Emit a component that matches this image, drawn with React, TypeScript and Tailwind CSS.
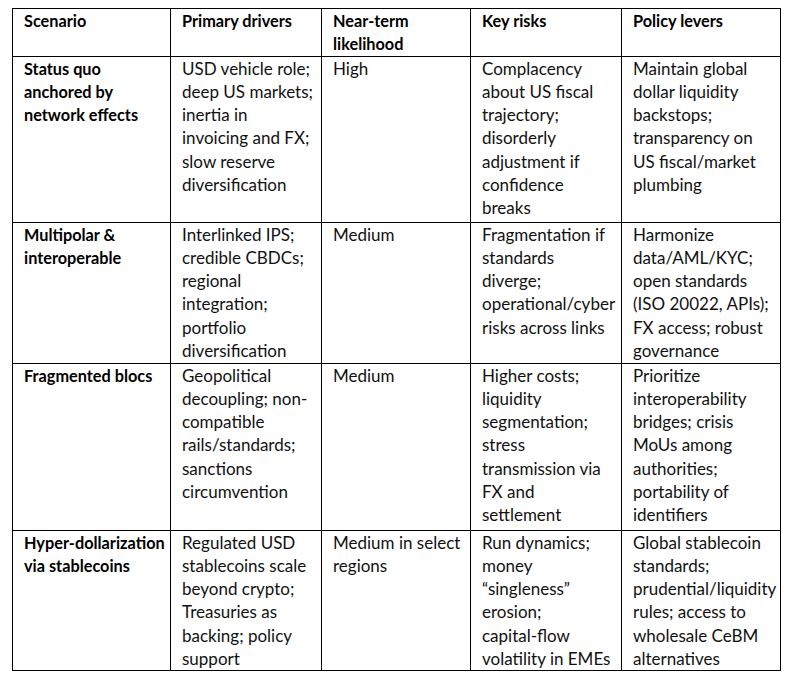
import React from "react";

type Row = { s: string[]; cells: string[][]; h: string };

const header = [["Scenario"], ["Primary drivers"], ["Near-term", "likelihood"], ["Key risks"], ["Policy levers"]];

const rows: Row[] = [
  {
    h: "h-[166px]",
    s: ["Status quo", "anchored by", "network effects"],
    cells: [
      ["USD vehicle role;", "deep US markets;", "inertia in", "invoicing and FX;", "slow reserve", "diversification"],
      ["High"],
      ["Complacency", "about US fiscal", "trajectory;", "disorderly", "adjustment if", "confidence", "breaks"],
      ["Maintain global", "dollar liquidity", "backstops;", "transparency on", "US fiscal/market", "plumbing"],
    ],
  },
  {
    h: "h-[141px]",
    s: ["Multipolar &", "interoperable"],
    cells: [
      ["Interlinked IPS;", "credible CBDCs;", "regional", "integration;", "portfolio", "diversification"],
      ["Medium"],
      ["Fragmentation if", "standards", "diverge;", "operational/cyber", "risks across links"],
      ["Harmonize", "data/AML/KYC;", "open standards", "(ISO 20022, APIs);", "FX access; robust", "governance"],
    ],
  },
  {
    h: "h-[167px]",
    s: ["Fragmented blocs"],
    cells: [
      ["Geopolitical", "decoupling; non-", "compatible", "rails/standards;", "sanctions", "circumvention"],
      ["Medium"],
      ["Higher costs;", "liquidity", "segmentation;", "stress", "transmission via", "FX and", "settlement"],
      ["Prioritize", "interoperability", "bridges; crisis", "MoUs among", "authorities;", "portability of", "identifiers"],
    ],
  },
  {
    h: "h-[138px]",
    s: ["Hyper-dollarization", "via stablecoins"],
    cells: [
      ["Regulated USD", "stablecoins scale", "beyond crypto;", "Treasuries as", "backing; policy", "support"],
      ["Medium in select", "regions"],
      ["Run dynamics;", "money", "\u201csingleness\u201d", "erosion;", "capital-flow", "volatility in EMEs"],
      ["Global stablecoin", "standards;", "prudential/liquidity", "rules; access to", "wholesale CeBM", "alternatives"],
    ],
  },
];

const widths = ["w-[158px]", "w-[151px]", "w-[149px]", "w-[151px]", "w-[159px]"];

function Lines({ lines, bold }: { lines: string[]; bold?: boolean }) {
  return (
    <div className={bold ? "font-bold text-[16.3px]" : "font-normal text-[17px] text-[#111]"}>
      {lines.map((l, i) => (
        <div key={i} className="whitespace-nowrap leading-[23.3px]">
          {l}
        </div>
      ))}
    </div>
  );
}

export default function App() {
  return (
    <div
      className="w-[794px] h-[677px] bg-white pt-[8px] pl-[12px] text-black"
      style={{ fontFamily: "Lato, 'Liberation Sans', sans-serif" }}
    >
      <table className="border-collapse table-fixed w-[769px]">
        <colgroup>
          {widths.map((w, i) => (
            <col key={i} className={w} />
          ))}
        </colgroup>
        <tbody>
          <tr className="h-[47px]">
            {header.map((h, i) => (
              <td key={i} className="border border-black align-top px-[11px] py-0">
                <Lines lines={h} bold />
              </td>
            ))}
          </tr>
          {rows.map((r, ri) => (
            <tr key={ri} className={r.h}>
              <td className="border border-black align-top px-[11px] py-0">
                <Lines lines={r.s} bold />
              </td>
              {r.cells.map((c, ci) => (
                <td key={ci} className="border border-black align-top px-[11px] py-0">
                  <Lines lines={c} />
                </td>
              ))}
            </tr>
          ))}
        </tbody>
      </table>
    </div>
  );
}
